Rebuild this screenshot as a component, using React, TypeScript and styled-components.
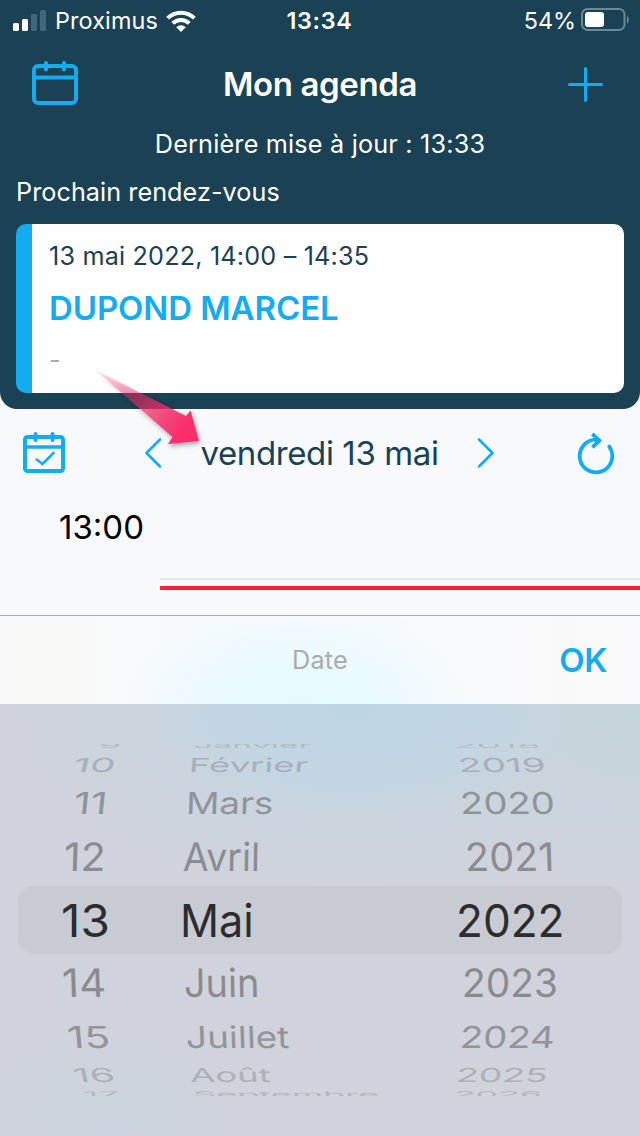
import React from "react";
import styled, { createGlobalStyle } from "styled-components";

const navy = "#1a4154";
const azure = "#14acf0";

const GlobalStyle = createGlobalStyle`
  * { box-sizing: border-box; }
  body { margin: 0; background: #f8f9fc; font-family: Inter, "Liberation Sans", sans-serif; }
`;

const Screen = styled.div`
  position: relative;
  width: 640px;
  height: 1136px;
  overflow: hidden;
  display: flex;
  flex-direction: column;
  background: #f8f9fc;
`;

const Label = styled.span<{ $size: number; $spacing?: number; $weight?: number; $color?: string }>`
  display: block;
  white-space: nowrap;
  font-size: ${(p) => p.$size}px;
  font-weight: ${(p) => p.$weight ?? 400};
  letter-spacing: ${(p) => p.$spacing ?? 0}px;
  color: ${(p) => p.$color ?? "#fff"};
  line-height: 32px;
`;

const Header = styled.header`
  height: 409px;
  flex: none;
  background: ${navy};
  border-radius: 0 0 17px 17px;
  display: flex;
  flex-direction: column;
`;

const StatusBar = styled.div`
  height: 41px;
  display: grid;
  grid-template-columns: 1fr auto 1fr;
  align-items: center;
  padding: 0 11px 0 13px;
`;

const StatusGroup = styled.div<{ $end?: boolean; $gap: number }>`
  display: flex;
  align-items: center;
  gap: ${(p) => p.$gap}px;
  justify-content: ${(p) => (p.$end ? "flex-end" : "flex-start")};
`;

const Clock = styled.div`
  padding-right: 3px;
`;

const TitleBar = styled.div`
  height: 86px;
  display: grid;
  grid-template-columns: 48px 1fr 48px;
  align-items: center;
  justify-items: center;
  padding: 0 31px;
`;

const Updated = styled.div`
  display: flex;
  justify-content: center;
  height: 34px;
  padding-top: 1px;
`;

const SectionTitle = styled.div`
  padding: 15px 16px 0;
  height: 63px;
`;

const Card = styled.article`
  margin: 0 16px;
  height: 169px;
  border-radius: 10px;
  border-left: 16px solid ${azure};
  background: #fff;
  padding: 16px 17px;
  display: flex;
  flex-direction: column;
  gap: 20px;
`;

const DayBar = styled.nav`
  height: 88px;
  flex: none;
  display: grid;
  grid-template-columns: 44px 1fr 44px;
  align-items: center;
  padding: 0 22px;
`;

const DaySwitch = styled.div`
  display: flex;
  align-items: center;
  justify-content: center;
  gap: 39px;
  padding-right: 1px;
`;

const Timeline = styled.div`
  height: 118px;
  flex: none;
  display: grid;
  grid-template-columns: 160px 1fr;
`;

const Hour = styled.div`
  padding: 14px 0 0 59px;
`;

const Slots = styled.div`
  display: flex;
  flex-direction: column;
  justify-content: flex-end;
  gap: 6px;
  padding-bottom: 25px;
`;

const Rule = styled.div<{ $now?: boolean }>`
  height: ${(p) => (p.$now ? 4 : 2)}px;
  background: ${(p) => (p.$now ? "#ff1c38" : "#e2e3e6")};
`;

const SheetBar = styled.div`
  height: 89px;
  flex: none;
  border-top: 1px solid #a9abae;
  display: grid;
  grid-template-columns: 1fr auto 1fr;
  align-items: center;
  padding: 0 33px;
  background:
    radial-gradient(ellipse 180px 115px at 300px 96px, #e2fbff 0%, rgba(230, 251, 255, 0.85) 38%, rgba(244, 251, 255, 0) 100%),
    linear-gradient(90deg, #f9f9f9 0, #f9f9f8 80px, #f7fafd 170px, #f8fafd 400px, #fafafc 520px, #f9f9f9 560px, #fafafc 640px);
`;

const Confirm = styled.div`
  display: flex;
  justify-content: flex-end;
`;

const Picker = styled.div`
  flex: 1;
  padding: 40px 18px;
  background:
    radial-gradient(ellipse 330px 190px at 350px 0, #bdd6e3 0%, rgba(193, 214, 228, 0.95) 35%, rgba(201, 213, 221, 0.6) 68%, rgba(208, 211, 219, 0) 100%),
    radial-gradient(ellipse 260px 170px at 640px 10px, #c4d5dc 0%, rgba(200, 213, 221, 0.7) 50%, rgba(208, 211, 219, 0) 100%),
    radial-gradient(ellipse 120px 80px at 105px 410px, #cad4dc 0%, rgba(208, 211, 219, 0) 100%),
    #d0d3db;
`;

const Wheel = styled.div`
  height: 352px;
  overflow: hidden;
  display: flex;
  flex-direction: column;
`;

const WheelRow = styled.div<{ $height: number; $active?: boolean; $ink: string; $shift?: number }>`
  height: ${(p) => p.$height}px;
  flex: none;
  display: grid;
  grid-template-columns: 160px 260px 1fr;
  align-items: center;
  border-radius: 16px;
  background: ${(p) => (p.$active ? "#c9cbd3" : "transparent")};
  color: ${(p) => p.$ink};
  padding-top: ${(p) => (p.$active ? 2 : 0)}px;
  padding-bottom: ${(p) => p.$shift ?? 0}px;
`;

const WheelCell = styled.span<{ $x: number; $sx: number; $sy: number; $skew: number }>`
  display: block;
  height: 0;
  line-height: 0;
  white-space: nowrap;
  font-size: 45px;
  transform-origin: 0 0;
  transform: translateX(${(p) => p.$x}px) skewX(${(p) => p.$skew}deg) scale(${(p) => p.$sx}, ${(p) => p.$sy});
`;

const Pointer = styled.svg`
  position: absolute;
  left: 85px;
  top: 360px;
`;

type Cell = [text: string, x: number, scale: number, skew: number];
type Row = { height: number; sy: number; ink: string; shift?: number; cells: [Cell, Cell, Cell] };

const rows: Row[] = [
  { height: 7, sy: 0.17, ink: "#b3bcc5", shift: 5, cells: [["9", 81, 0.8, -10], ["Janvier", 16, 0.75, -5], ["2018", 15, 0.86, 5]] },
  { height: 27, sy: 0.43, ink: "#a7b0b9", cells: [["10", 56, 0.89, -14], ["Février", 11, 0.81, -4], ["2019", 20, 0.86, 7]] },
  { height: 50, sy: 0.67, ink: "#8f949b", cells: [["11", 56, 0.91, -6], ["Mars", 8, 0.82, -2], ["2020", 22, 0.85, 3]] },
  { height: 58, sy: 0.87, ink: "#8a8c90", cells: [["12", 46, 0.91, -2], ["Avril", 5, 0.83, -1], ["2021", 27, 0.88, 2]] },
  { height: 68, sy: 1, ink: "#2c2d2f", cells: [["13", 43, 1.06, 0], ["Mai", 2, 0.96, 0], ["2022", 18, 0.98, 0]] },
  { height: 58, sy: 0.87, ink: "#8a8b8f", cells: [["14", 44, 0.93, 2], ["Juin", 6, 0.84, 1], ["2023", 24, 0.865, -1]] },
  { height: 50, sy: 0.67, ink: "#939499", cells: [["15", 49, 0.94, 5], ["Juillet", 8, 0.82, 2], ["2024", 22, 0.85, -4]] },
  { height: 26, sy: 0.43, ink: "#adb0b6", cells: [["16", 55, 0.91, 12], ["Août", 12, 0.81, 4], ["2025", 18, 0.83, -7]] },
  { height: 12, sy: 0.17, ink: "#b5b7bd", cells: [["17", 65, 0.84, 12], ["Septembre", 15, 0.8, 4], ["2026", 16, 0.79, -7]] },
];

const SignalIcon = () => (
  <svg width="34" height="22" viewBox="0 0 34 22">
    <rect x="0" y="13" width="6" height="8" rx="1.6" fill="#fff" />
    <rect x="9" y="9" width="6" height="12" rx="1.6" fill="#fff" />
    <rect x="18" y="4" width="6" height="17" rx="1.6" fill="#41677a" />
    <rect x="27" y="0" width="6" height="21" rx="1.6" fill="#41677a" />
  </svg>
);

const WifiIcon = () => (
  <svg width="30" height="22" viewBox="0 0 30 22" fill="none" stroke="#fff" strokeWidth="4">
    <path d="M1.6 8.2A19 19 0 0 1 28.4 8.2" />
    <path d="M6.8 13.4A11.7 11.7 0 0 1 23.2 13.4" />
    <path d="M15 22L10.2 17.2A6.8 6.8 0 0 1 19.8 17.2Z" fill="#fff" stroke="none" />
  </svg>
);

const BatteryIcon = () => (
  <svg width="48" height="25" viewBox="0 0 48 25">
    <rect x="1" y="1" width="42.5" height="21" rx="5.5" fill="none" stroke="#6c8995" strokeWidth="2" />
    <rect x="4" y="4" width="19" height="15" rx="3" fill="#fff" />
    <path d="M46 8c2.4 1.2 2.4 6.3 0 7.5z" fill="#6c8995" />
  </svg>
);

const CalendarIcon = () => (
  <svg width="48" height="48" viewBox="0 0 48 48" fill="none" stroke={azure} strokeWidth="4" strokeLinecap="round">
    <rect x="3" y="6" width="42" height="37" rx="4" />
    <path d="M3 17.500H45M15 3V9.500M33 3V9.500" />
  </svg>
);

const CalendarCheckIcon = () => (
  <svg width="44" height="42" viewBox="0 0 44 42" fill="none" stroke={azure} strokeWidth="4" strokeLinecap="round">
    <rect x="3" y="5" width="38" height="34" rx="2.5" />
    <path d="M3 15H41" strokeWidth="3.6" />
    <path d="M13.5 2V8M30.5 2V8" />
    <path d="M14.7 27.5L20.5 32L31.5 21" strokeWidth="2.6" />
  </svg>
);

const PlusIcon = () => (
  <svg width="36" height="36" viewBox="0 0 36 36" stroke={azure} strokeWidth="3" strokeLinecap="round">
    <path d="M18.500 2.500V34.500M2.500 18.500H34.500" />
  </svg>
);

const Chevron = ({ next }: { next?: boolean }) => (
  <svg width="18" height="30" viewBox="0 0 18 30" fill="none" stroke={azure} strokeWidth="2.6" strokeLinecap="round" strokeLinejoin="round">
    <path d={next ? "M2 1.500L15.500 15L2 28.500" : "M16 1.500L2.500 15L16 28.500"} />
  </svg>
);

const RefreshIcon = () => (
  <svg width="44" height="44" viewBox="0 0 44 44" fill="none" stroke={azure} strokeWidth="3.8" strokeLinecap="round">
    <path d="M35.3 15.6A16.3 16.3 0 1 1 22 8.700L25 9.200" />
    <path d="M18.300 2.800L25.300 9.700L18.300 16.300" strokeLinecap="butt" />
  </svg>
);

export default function App() {
  return (
    <Screen>
      <GlobalStyle />
      <Header>
        <StatusBar>
          <StatusGroup $gap={8}>
            <SignalIcon />
            <Label $size={23.4} $spacing={0.12}>Proximus</Label>
            <WifiIcon />
          </StatusGroup>
          <Clock>
            <Label $size={23.4} $weight={600} $spacing={0.7}>13:34</Label>
          </Clock>
          <StatusGroup $gap={5} $end>
            <Label $size={23.4}>54%</Label>
            <BatteryIcon />
          </StatusGroup>
        </StatusBar>
        <TitleBar>
          <CalendarIcon />
          <Label $size={33} $weight={600} $spacing={-0.4}>Mon agenda</Label>
          <PlusIcon />
        </TitleBar>
        <Updated>
          <Label $size={25.2} $spacing={0.2}>Dernière mise à jour : 13:33</Label>
        </Updated>
        <SectionTitle>
          <Label $size={25.2} $spacing={0.06}>Prochain rendez-vous</Label>
        </SectionTitle>
        <Card>
          <Label $size={25.2} $spacing={0.18} $color={navy}>13 mai 2022, 14:00 – 14:35</Label>
          <Label $size={33} $weight={600} $spacing={-0.1} $color={azure}>DUPOND MARCEL</Label>
          <Label $size={25.2} $color="#aaa">-</Label>
        </Card>
      </Header>
      <DayBar>
        <CalendarCheckIcon />
        <DaySwitch>
          <Chevron />
          <Label $size={33} $spacing={-0.4} $color={navy}>vendredi 13 mai</Label>
          <Chevron next />
        </DaySwitch>
        <RefreshIcon />
      </DayBar>
      <Timeline>
        <Hour>
          <Label $size={33} $color="#000">13:00</Label>
        </Hour>
        <Slots>
          <Rule />
          <Rule $now />
        </Slots>
      </Timeline>
      <SheetBar>
        <span />
        <Label $size={25.2} $spacing={0.2} $color="#a9abad">Date</Label>
        <Confirm>
          <Label $size={33} $weight={600} $spacing={-0.4} $color={azure}>OK</Label>
        </Confirm>
      </SheetBar>
      <Picker>
        <Wheel>
          {rows.map((row) => (
            <WheelRow key={row.cells[0][0]} $height={row.height} $ink={row.ink} $shift={row.shift} $active={row.sy === 1}>
              {row.cells.map(([text, x, scale, skew]) => (
                <WheelCell key={text} $x={x} $sx={scale} $sy={row.sy} $skew={skew}>
                  {text}
                </WheelCell>
              ))}
            </WheelRow>
          ))}
        </Wheel>
      </Picker>
      <Pointer width="130" height="100" viewBox="85 360 130 100">
        <defs>
          <linearGradient id="fade" gradientUnits="userSpaceOnUse" x1="95" y1="370" x2="199" y2="441">
            <stop offset="0" stopColor="#f92b6b" stopOpacity="0.1" />
            <stop offset="0.45" stopColor="#f92b6b" stopOpacity="0.55" />
            <stop offset="0.85" stopColor="#fb2d6d" />
          </linearGradient>
          <filter id="shade" x="-20%" y="-20%" width="140%" height="140%">
            <feDropShadow dx="1" dy="2" stdDeviation="2.5" floodColor="#000" floodOpacity="0.4" />
          </filter>
        </defs>
        <path d="M95 370L186 416L190.5 410.5L199 441L168 444L172.5 437Z" fill="url(#fade)" filter="url(#shade)" />
      </Pointer>
    </Screen>
  );
}
